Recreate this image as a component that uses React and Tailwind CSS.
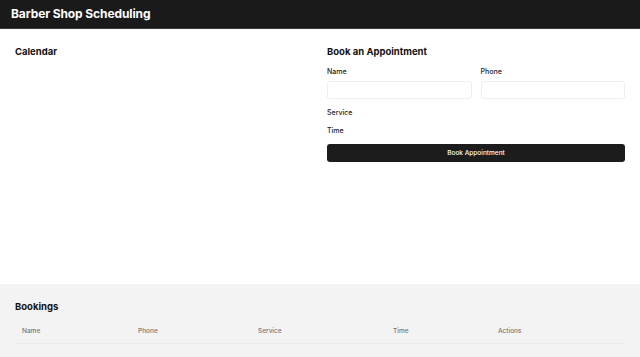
const Field = ({ label, children }) => (
  <div className="flex flex-col">
    <label className="text-[7px] font-medium text-[#222] leading-none mb-[6px]">{label}</label>
    {children}
  </div>
);

const columns = [
  { name: 'Name', w: 'w-[116px]' },
  { name: 'Phone', w: 'w-[120px]' },
  { name: 'Service', w: 'w-[135px]' },
  { name: 'Time', w: 'w-[105px]' },
  { name: 'Actions', w: 'flex-1' },
];

export default function App() {
  return (
    <div className="flex flex-col min-h-[357px] bg-white font-['Inter',sans-serif]">
      <header className="h-[29px] bg-[#1a1a1b] border-b border-[#3a3a3a] px-[11px] flex items-center">
        <h1 className="text-[12px] font-bold text-white tracking-[-0.1px]">Barber Shop Scheduling</h1>
      </header>

      <main className="grid grid-cols-2 gap-[14px] px-[15px] pt-[16px] h-[255px]">
        <section>
          <h2 className="text-[9.5px] font-bold text-[#111]">Calendar</h2>
        </section>

        <section className="flex flex-col">
          <h2 className="text-[9.5px] font-bold text-[#111] mb-[9px]">Book an Appointment</h2>
          <div className="grid grid-cols-2 gap-[9px]">
            <Field label="Name">
              <input className="h-[18px] rounded-[3px] border border-[#eeeeee] bg-white outline-none" />
            </Field>
            <Field label="Phone">
              <input className="h-[18px] rounded-[3px] border border-[#eeeeee] bg-white outline-none" />
            </Field>
          </div>
          <div className="text-[7px] font-medium text-[#222] leading-none mt-[10px]">Service</div>
          <div className="text-[7px] font-medium text-[#222] leading-none mt-[11px]">Time</div>
          <button className="mt-[10px] h-[18px] pt-[2px] rounded-[3px] bg-[#1c1c1d] text-white text-[6.5px] font-medium">
            Book Appointment
          </button>
        </section>
      </main>

      <section className="flex-1 bg-[#f3f3f3] px-[15px] pt-[16px]">
        <h2 className="text-[9.5px] font-bold text-[#111]">Bookings</h2>
        <div className="mt-[13px] flex border-b border-[#eaeaea] pb-[6px] pl-[7px]">
          {columns.map((c) => (
            <div key={c.name} className={`${c.w} text-[6.5px] text-[#777] font-medium`}>{c.name}</div>
          ))}
        </div>
      </section>
    </div>
  );
}
